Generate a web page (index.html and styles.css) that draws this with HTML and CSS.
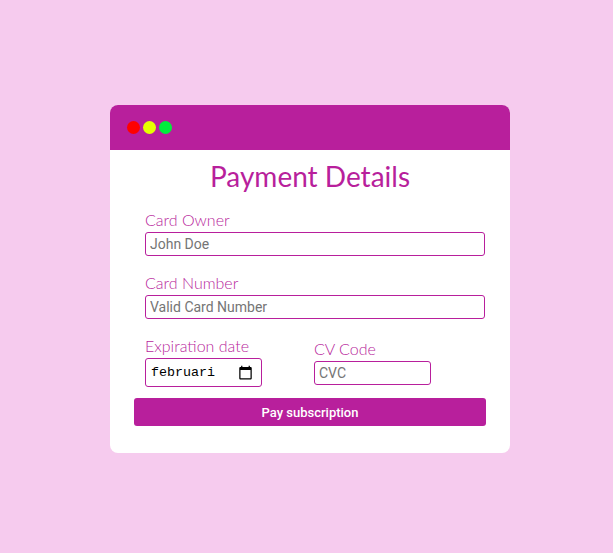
FILE: index.html
```html
<!DOCTYPE html>
<html>
<head>
<meta charset="utf-8">
<link rel="stylesheet" href="styles.css">
</head>
<body>
<div class="card">
  <div class="card-header">
    <span class="dot dot-red"></span>
    <span class="dot dot-yellow"></span>
    <span class="dot dot-green"></span>
  </div>
  <div class="card-body">
    <h1 class="title">Payment Details</h1>
    <form class="form">
      <div class="field">
        <label class="label">Card Owner</label>
        <input class="input" type="text" placeholder="John Doe">
      </div>
      <div class="field">
        <label class="label">Card Number</label>
        <input class="input" type="text" placeholder="Valid Card Number">
      </div>
      <div class="row">
        <div class="field-small">
          <label class="label">Expiration date</label>
          <div class="date-input">
            <span class="date-text">februari</span>
            <svg class="cal" viewBox="0 0 24 24" width="15" height="15"><path d="M20 3h-1V1h-2v2H7V1H5v2H4c-1.1 0-2 .9-2 2v16c0 1.1.9 2 2 2h16c1.1 0 2-.9 2-2V5c0-1.1-.9-2-2-2zm0 18H4V8h16v13z" fill="#000"/></svg>
          </div>
        </div>
        <div class="field-small">
          <label class="label">CV Code</label>
          <input class="input input-small" type="text" placeholder="CVC">
        </div>
      </div>
      <button class="btn" type="button">Pay subscription</button>
    </form>
  </div>
</div>
</body>
</html>
```

FILE: styles.css
```css
html, body {
  margin: 0;
  padding: 0;
}
body {
  background: #f6cbee;
  height: 553px;
  padding-top: 105px;
  box-sizing: border-box;
}
.card {
  width: 400px;
  margin-left: 110px;
  background: #fff;
  border-radius: 8px;
  overflow: hidden;
}
.card-header {
  height: 45px;
  background: #b81f9c;
  display: flex;
  align-items: center;
  gap: 3px;
  padding-left: 17px;
}
.dot {
  width: 13px;
  height: 13px;
  border-radius: 50%;
  display: block;
}
.dot-red { background: #ff0000; }
.dot-yellow { background: #e6ff00; }
.dot-green { background: #00ee3c; }
.card-body {
  padding: 9px 0 27px;
}
.title {
  margin: 0;
  font-family: Lato, sans-serif;
  font-weight: 400;
  font-size: 28px;
  line-height: 34px;
  color: #b81f9c;
  text-align: center;
}
.form {
  margin: 17px 0 0 35px;
  width: 340px;
}
.field {
  display: flex;
  flex-direction: column;
  gap: 3px;
  margin-bottom: 17px;
}
.label {
  font-family: Lato, sans-serif;
  font-weight: 300;
  font-size: 16px;
  line-height: 19px;
  color: #b81f9c;
}
.input {
  box-sizing: border-box;
  height: 24px;
  width: 100%;
  border: 1px solid #b81f9c;
  border-radius: 3px;
  padding: 0 4px;
  font-family: Roboto, sans-serif;
  font-weight: 400;
  font-size: 14px;
  outline: none;
}
.input::placeholder {
  color: #757575;
}
.row {
  display: grid;
  grid-template-columns: 169px 117px;
  align-items: center;
}
.field-small {
  display: flex;
  flex-direction: column;
  gap: 3px;
}
.input-small {
  width: 117px;
}
.date-input {
  box-sizing: border-box;
  width: 117px;
  height: 29px;
  border: 1px solid #b81f9c;
  border-radius: 3px;
  display: flex;
  align-items: center;
  justify-content: space-between;
  padding: 0 8px 0 5px;
}
.date-text {
  font-family: "Liberation Mono", monospace;
  font-size: 13.333px;
  color: #000;
}
.cal {
  display: block;
}
.btn {
  display: block;
  box-sizing: border-box;
  margin: 11px 0 0 -11px;
  width: 352px;
  height: 28px;
  border: none;
  border-radius: 3px;
  background: #b81f9c;
  color: #fff;
  font-family: Roboto, sans-serif;
  font-weight: 500;
  font-size: 13px;
  padding: 0;
}
```
